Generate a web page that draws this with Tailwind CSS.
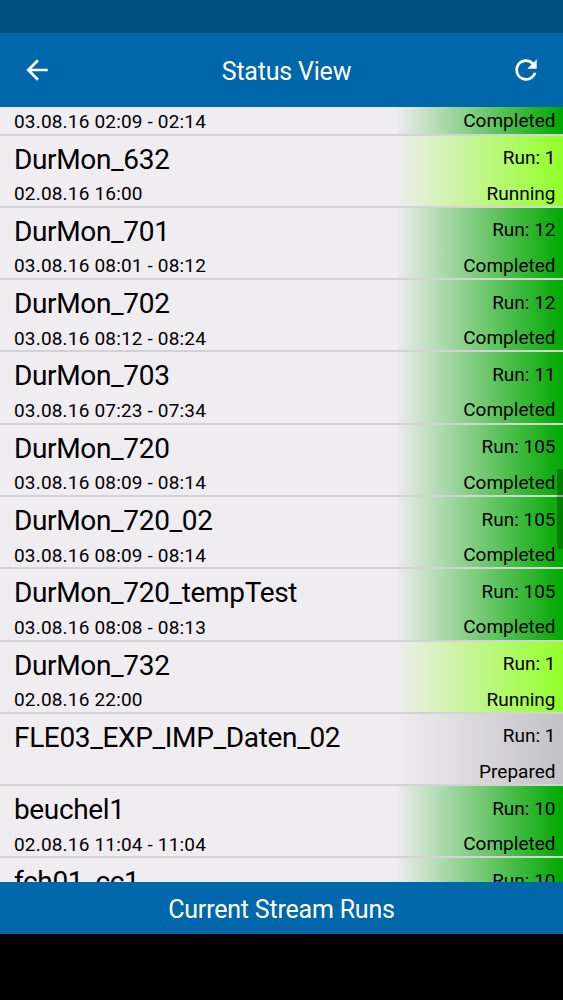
<!DOCTYPE html>
<html lang="en">
<head>
  <meta charset="UTF-8" />
  <meta name="viewport" content="width=device-width, initial-scale=1.0" />
  <title>Status View</title>
  <script src="https://cdn.jsdelivr.net/npm/@tailwindcss/browser@4"></script>
</head>
<body class="bg-black font-['Roboto',sans-serif] text-black">
  <div class="flex flex-col h-[1000px] w-[563px] overflow-hidden">
    <!-- System status bar -->
    <div class="h-[33px] shrink-0 bg-[#00507f]"></div>

    <!-- Header -->
    <header class="flex h-[74px] shrink-0 items-center bg-[#0067ab] px-[21px] text-white">
      <button aria-label="Back">
        <svg class="size-8" viewBox="0 0 24 24" fill="currentColor"><path d="M20 11H7.83l5.59-5.59L12 4l-8 8 8 8 1.41-1.41L7.83 13H20v-2z" /></svg>
      </button>
      <h1 class="flex-1 pl-[10px] pt-[3px] text-center text-[25px] leading-8 tracking-[-0.2px]">Status View</h1>
      <button aria-label="Refresh">
        <svg class="size-8" viewBox="0 0 24 24" fill="currentColor"><path d="M17.65 6.35C16.2 4.9 14.21 4 12 4c-4.42 0-7.99 3.58-7.99 8s3.57 8 7.99 8c3.73 0 6.84-2.55 7.73-6h-2.08c-.82 2.33-3.04 4-5.65 4-3.31 0-6-2.69-6-6s2.69-6 6-6c1.66 0 3.14.69 4.22 1.78L13 11h7V4l-2.35 2.35z" /></svg>
      </button>
    </header>

    <!-- Stream list -->
    <main class="relative h-[775px] shrink-0 overflow-hidden bg-[#efedf0]">
      <ul id="streams" class="-mt-[43.6px]"></ul>
      <!-- Scroll indicator -->
      <div class="absolute right-0 top-[362px] h-[80px] w-[6px] bg-black/25"></div>
    </main>

    <!-- Footer -->
    <footer class="flex h-[52px] shrink-0 items-center justify-center bg-[#0067ab] pt-1 text-[25px] leading-8 tracking-[-0.2px] text-white">
      <span>Current Stream Runs</span>
    </footer>
  </div>

  <script>
    const streams = [
      { name: '', time: '03.08.16 02:09 - 02:14', run: '', status: 'Completed' },
      { name: 'DurMon_632', time: '02.08.16 16:00', run: 'Run: 1', status: 'Running' },
      { name: 'DurMon_701', time: '03.08.16 08:01 - 08:12', run: 'Run: 12', status: 'Completed' },
      { name: 'DurMon_702', time: '03.08.16 08:12 - 08:24', run: 'Run: 12', status: 'Completed' },
      { name: 'DurMon_703', time: '03.08.16 07:23 - 07:34', run: 'Run: 11', status: 'Completed' },
      { name: 'DurMon_720', time: '03.08.16 08:09 - 08:14', run: 'Run: 105', status: 'Completed' },
      { name: 'DurMon_720_02', time: '03.08.16 08:09 - 08:14', run: 'Run: 105', status: 'Completed' },
      { name: 'DurMon_720_tempTest', time: '03.08.16 08:08 - 08:13', run: 'Run: 105', status: 'Completed' },
      { name: 'DurMon_732', time: '02.08.16 22:00', run: 'Run: 1', status: 'Running' },
      { name: 'FLE03_EXP_IMP_Daten_02', time: '', run: 'Run: 1', status: 'Prepared' },
      { name: 'beuchel1', time: '02.08.16 11:04 - 11:04', run: 'Run: 10', status: 'Completed' },
      { name: 'fch01_cc1', time: '', run: 'Run: 10', status: '' }
    ];

    const statusColors = {
      Running: 'bg-linear-to-r/srgb from-[#efedf0] to-[#92ff28]',
      Prepared: 'bg-linear-to-r/srgb from-[#efedf0] to-[#c2c1c5]'
    };
    const defaultColor = 'bg-linear-to-r/srgb from-[#efedf0] to-[#00a800]';

    document.getElementById('streams').innerHTML = streams.map(s => `
      <li class="flex h-[72.27px] justify-between border-b-2 border-[#d3d2d5]">
        <div class="pl-[14px] pt-[8px]">
          <div class="h-8 text-[28px] leading-8 tracking-[-0.35px]">${s.name}</div>
          <div class="mt-[6.5px] text-[19px] leading-6 tracking-[0.18px]">${s.time}</div>
        </div>
        <div class="w-[168px] pr-[7.5px] pt-[10.5px] text-right text-[19px] leading-6 ${statusColors[s.status] || defaultColor}">
          <div class="h-6">${s.run}</div>
          <div class="mt-[11.5px]">${s.status}</div>
        </div>
      </li>`).join('');
  </script>
</body>
</html>
